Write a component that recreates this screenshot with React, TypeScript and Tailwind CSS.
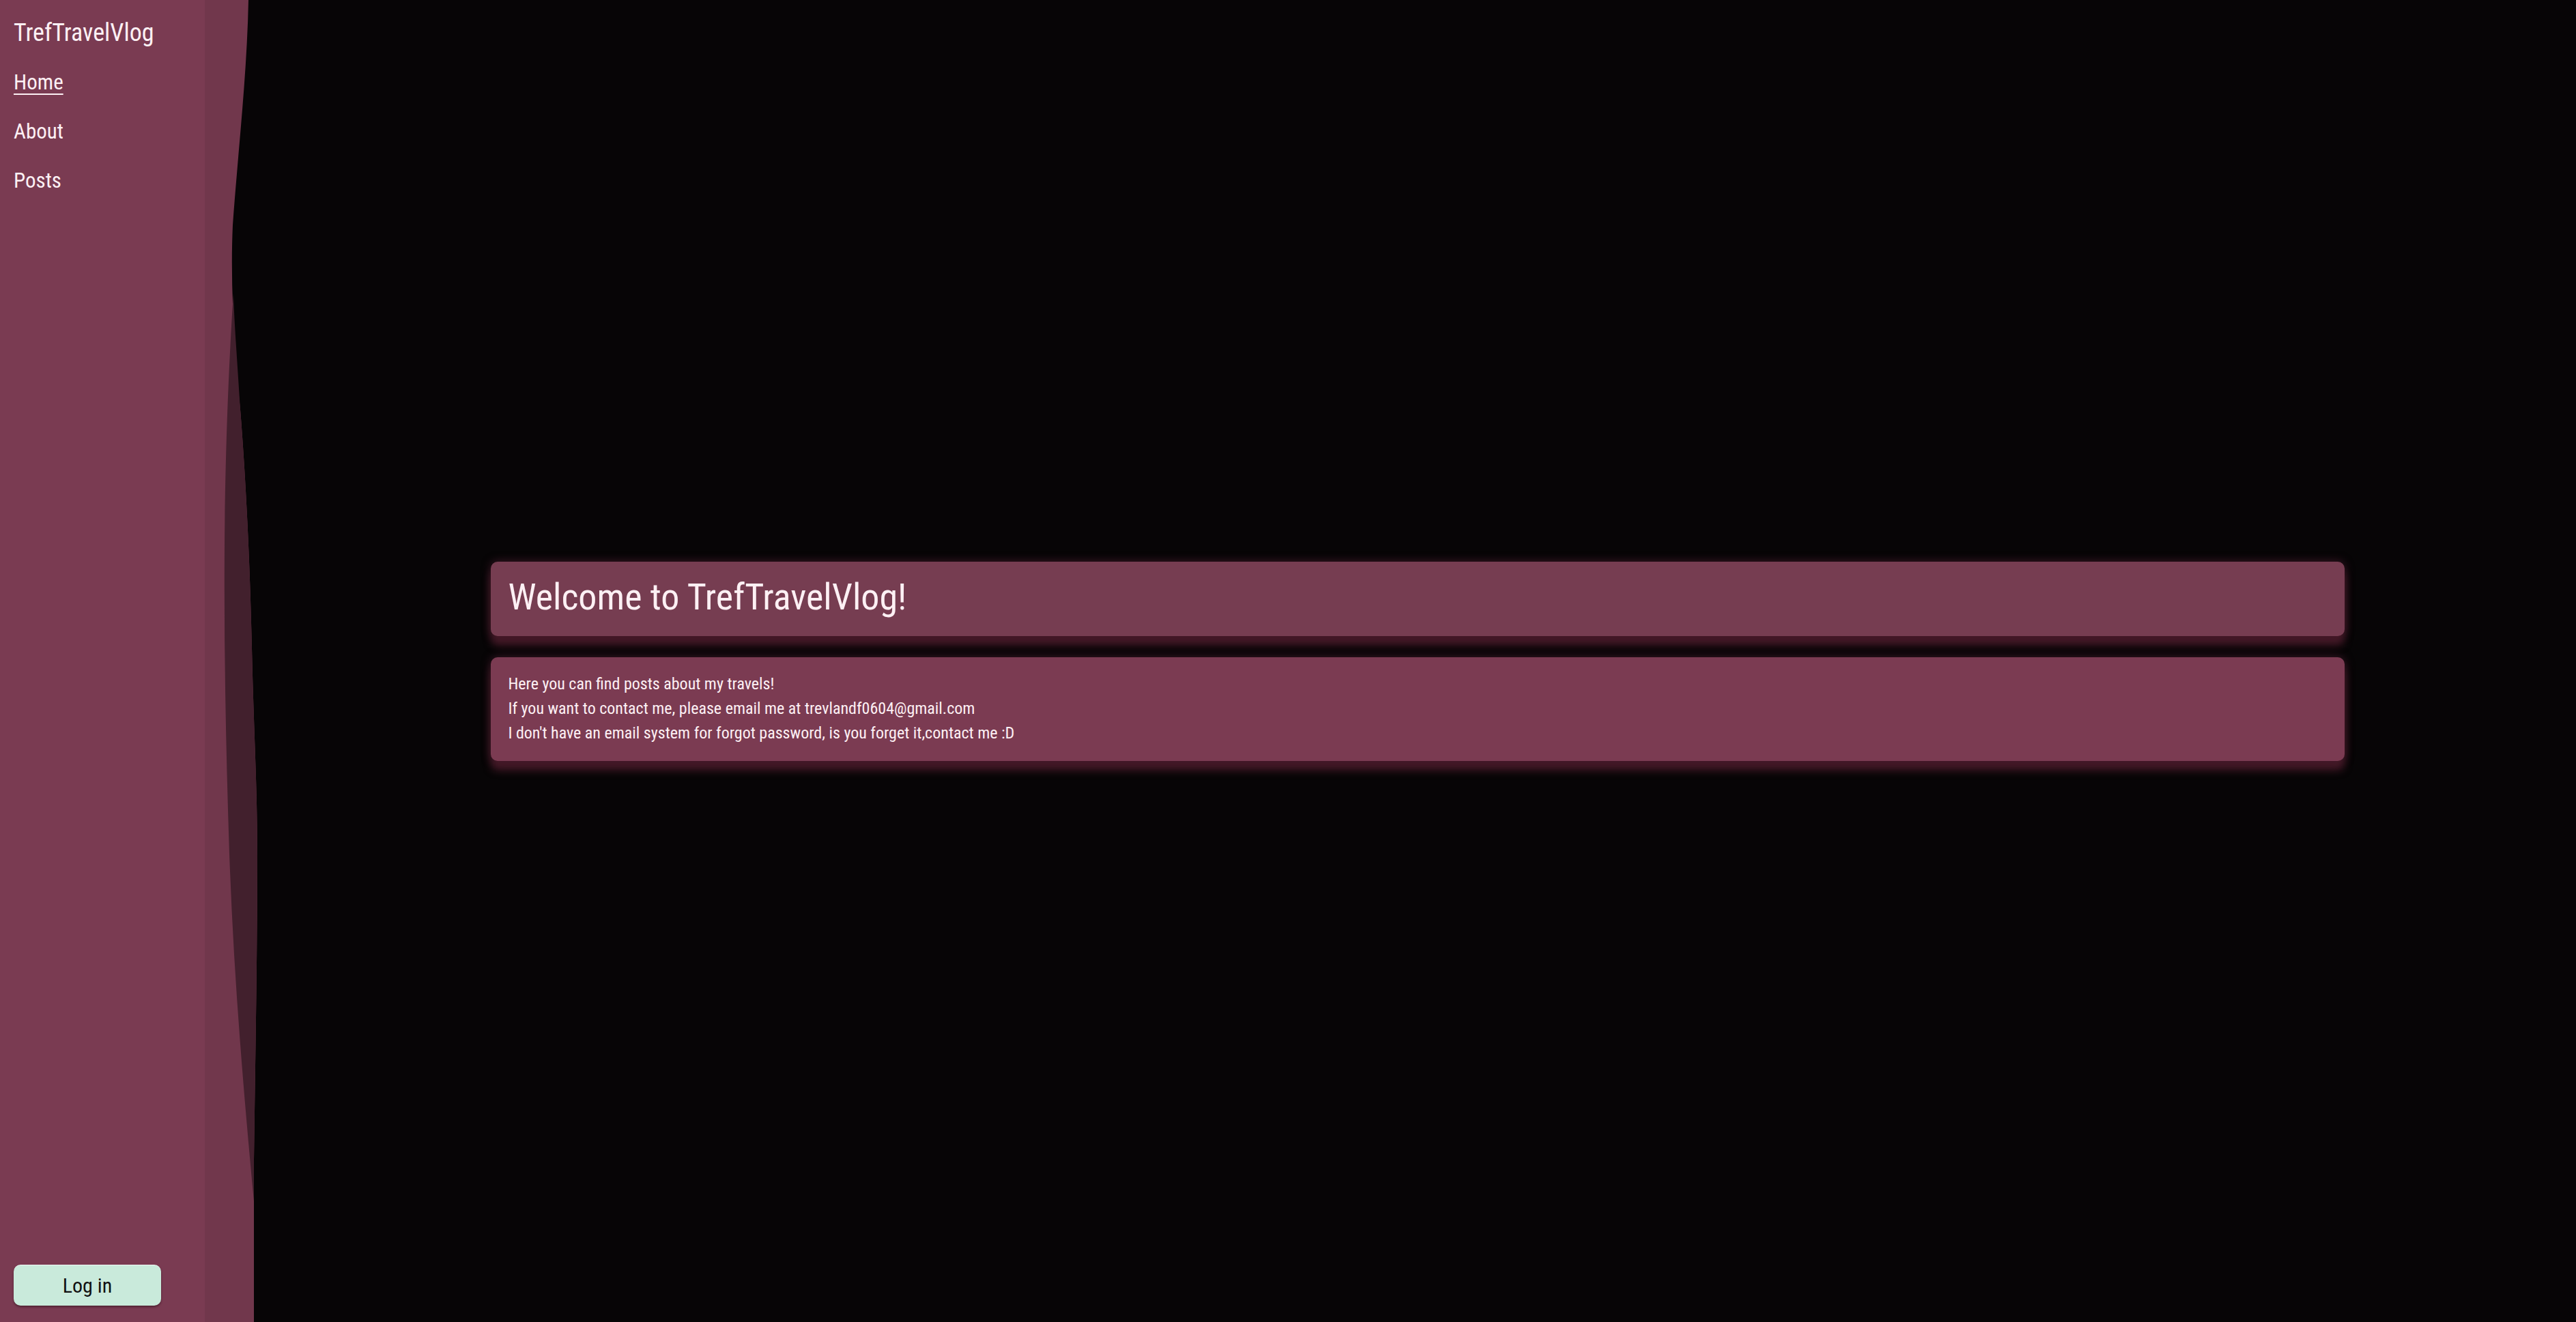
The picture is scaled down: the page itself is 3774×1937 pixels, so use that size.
import React from 'react';

// Sidebar links
const links = [
  { label: 'Home', active: true },
  { label: 'About', active: false },
  { label: 'Posts', active: false },
];

function SidebarEdge() {
  // wavy right edge of the sidebar
  return (
    <svg
      className="h-full w-[80px] shrink-0"
      viewBox="0 0 80 1937"
      preserveAspectRatio="none"
    >
      <path
        d="M0,0 L64,0 C62,110 48,230 41,330 C37,420 44,520 52,600 C60,700 66,820 69,950 C72,1080 77,1150 77,1250 C77,1400 74,1550 72,1700 L72,1937 L0,1937 Z"
        fill="#71374c"
      />
      <path
        d="M42,430 C36,520 30,650 29,800 C28,950 31,1100 36,1250 C42,1420 55,1580 72,1760 L72,1700 C74,1550 77,1400 77,1250 C77,1150 72,1080 69,950 C66,820 60,700 52,600 C47,520 43,470 42,430 Z"
        fill="#42202d"
      />
    </svg>
  );
}

export default function App() {
  return (
    <div className="flex h-screen w-full bg-[#070506] font-['Roboto_Condensed','Roboto',sans-serif] text-[#fdf0f4]">
      <aside className="flex h-full shrink-0">
        <div className="flex w-[300px] flex-col bg-[#7a3b52] pl-[20px] pt-[26px] pb-[24px]">
          <h2 className="text-[36px] leading-[44px] mb-[15px]">TrefTravelVlog</h2>
          <nav className="flex flex-col">
            {links.map((link) => (
              <a
                key={link.label}
                href="#"
                className={`text-[31px] leading-[72px] ${
                  link.active ? 'underline decoration-2 underline-offset-[6px]' : ''
                }`}
              >
                {link.label}
              </a>
            ))}
          </nav>
          <button className="mt-auto h-[60px] w-[216px] rounded-[10px] bg-[#c9eadb] text-[30px] text-[#111] border-t border-white/70 shadow-[0_2px_3px_rgba(40,10,20,0.5)]">
            Log in
          </button>
        </div>
        <SidebarEdge />
      </aside>

      <main className="flex flex-1 flex-col items-center justify-center">
        <div className="flex w-4/5 flex-col gap-[31px]">
          <div className="rounded-[10px] bg-[#763d51] px-[25px] pt-[20px] pb-[26px] shadow-[0_14px_12px_rgba(70,25,40,0.95),0_0_14px_rgba(120,45,75,0.5)]">
            <h1 className="text-[54px] leading-[63px]">Welcome to TrefTravelVlog!</h1>
          </div>
          <div className="rounded-[10px] bg-[#7b3b52] px-[25px] pt-[21px] pb-[23px] text-[24px] leading-[36px] shadow-[0_14px_12px_rgba(70,25,40,0.95),0_0_14px_rgba(120,45,75,0.5)]">
            <p>Here you can find posts about my travels!</p>
            <p>If you want to contact me, please email me at trevlandf0604@gmail.com</p>
            <p>I don't have an email system for forgot password, is you forget it,contact me :D</p>
          </div>
        </div>
      </main>
    </div>
  );
}
